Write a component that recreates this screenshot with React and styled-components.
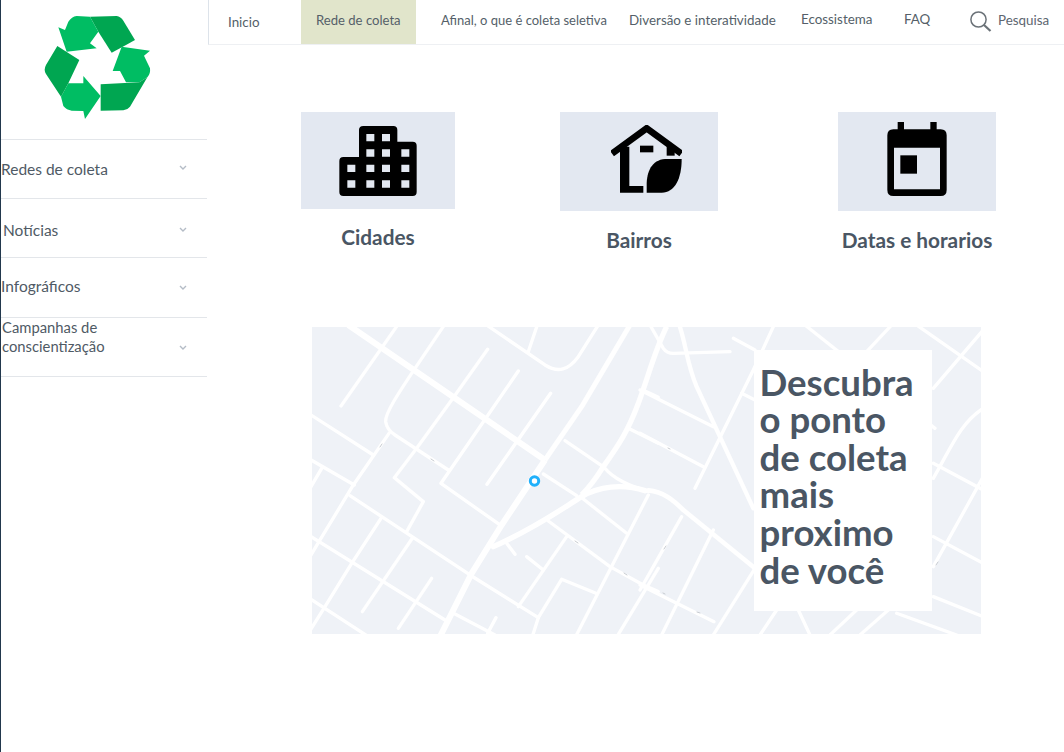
import styled, { createGlobalStyle } from 'styled-components';

const GlobalStyle = createGlobalStyle`
  html, body {
    margin: 0;
    padding: 0;
    background: #fff;
    font-family: 'Lato', 'Noto Sans', sans-serif;
    overflow: hidden;
  }
`;

const Page = styled.div`
  display: flex;
  width: 1064px;
  height: 752px;
  overflow: hidden;
`;

const Sidebar = styled.aside`
  flex: 0 0 208px;
  width: 208px;
  box-sizing: border-box;
  border-left: 1px solid #22384d;
  padding-right: 1px;
`;

const LogoBox = styled.div`
  height: 139px;
  box-sizing: border-box;
  padding: 16px 0 0 43px;
`;

const SideRow = styled.div`
  display: flex;
  align-items: ${props => props.$top ? 'flex-start' : 'center'};
  justify-content: space-between;
  box-sizing: border-box;
  height: ${props => props.$height}px;
  border-top: 1px solid #e3e6ea;
  padding-left: ${props => props.$indent}px;
  padding-right: 19px;
  color: #4f5a65;
`;

const SideLabel = styled.span`
  position: relative;
  top: ${props => props.$nudge || 0}px;
  font-size: ${props => props.$small ? '14.8px' : '15.5px'};
  line-height: 19px;
`;

const SideEnd = styled.div`
  width: 206px;
  border-top: 1px solid #e3e6ea;
`;

const Chevron = styled.svg`
  position: relative;
  top: ${props => props.$nudge || 0}px;
  width: 10px;
  height: 7px;
  fill: none;
  stroke: #b4bcc6;
  stroke-width: 1.4;
  flex: none;
`;

const Main = styled.main`
  flex: 1;
  min-width: 0;
`;

const TopBar = styled.nav`
  display: flex;
  height: 45px;
  box-sizing: border-box;
  border-left: 1px solid #dde3ea;
  border-bottom: 1px solid #eef0f3;
`;

const NavItem = styled.a`
  display: block;
  box-sizing: border-box;
  flex: 0 0 ${props => props.$width}px;
  min-width: 0;
  padding: ${props => props.$top}px 0 0 ${props => props.$left}px;
  background: ${props => props.$active ? '#e1e5cb' : 'transparent'};
  color: #555f69;
  font-size: ${props => props.$size || 13.4}px;
  line-height: 18px;
  white-space: nowrap;
`;

const SearchBox = styled.div`
  display: flex;
  align-items: flex-start;
  gap: 5px;
  padding: 7px 0 0 0;
  color: #5d6670;
  font-size: 13.4px;
  line-height: 18px;
`;

const SearchText = styled.span`
  padding-top: 4px;
`;

const Shortcuts = styled.section`
  display: grid;
  grid-template-columns: 259px 278px 158px;
  align-items: start;
  padding: 67px 0 0 93px;
`;

const Shortcut = styled.div`
  width: ${props => props.$width}px;
  display: flex;
  flex-direction: column;
  align-items: center;
`;

const Tile = styled.div`
  display: flex;
  justify-content: center;
  align-items: flex-start;
  box-sizing: border-box;
  width: 100%;
  height: ${props => props.$height}px;
  padding-top: ${props => props.$top}px;
  background: #e3e8f1;
`;

const TileIcon = styled.svg`
  display: block;
  width: ${props => props.$w}px;
  height: ${props => props.$h}px;
  margin-left: ${props => props.$shift || 0}px;
  fill: #000;
`;

const ShortcutLabel = styled.div`
  margin-top: ${props => props.$gap}px;
  color: #4a5664;
  font-size: 20.8px;
  font-weight: 700;
  line-height: 25px;
  white-space: nowrap;
`;

const MapPanel = styled.section`
  position: relative;
  width: 669px;
  height: 307px;
  margin: 75px 0 0 104px;
  background: #eff2f7;
  overflow: hidden;
`;

const MapDrawing = styled.svg`
  display: block;
  width: 669px;
  height: 307px;
`;

const CallOut = styled.div`
  position: absolute;
  top: 23px;
  right: 49px;
  box-sizing: border-box;
  width: 178px;
  height: 261px;
  padding: 13.6px 0 0 5.5px;
  background: #fff;
  color: #4a5664;
  font-size: 36.6px;
  font-weight: 700;
  line-height: 37.6px;
`;

function RecycleLogo() {
  return (
    <svg width="108" height="104" viewBox="132 48 324 312" style={{ display: 'block' }}>
      <g>
        <path fill="#00a651" d="M270 50 L350 48 Q362 50 370 62 L405 120 L378 135 L335 158 L295 95 Z" />
        <path fill="#00bd63" d="M270 50 L230 48 Q215 50 205 65 L195 90 L175 82 L200 155 L290 145 L270 130 L295 95 Z" />
        <path fill="#00bd63" d="M365 140 L450 152 L432 167 L450 205 Q452 222 442 232 L418 247 L378 247 L360 213 L338 213 Z" />
        <path fill="#00a651" d="M302 253 L418 247 L442 232 L390 320 Q382 330 370 331 L302 332 Z" />
        <path fill="#00bd63" d="M205 250 L250 250 L250 228 L302 288 L255 357 L250 333 L215 332 Q200 330 190 318 L183 290 Z" />
        <path fill="#00a651" d="M172 138 L238 180 L205 250 L183 290 L138 222 Q130 210 138 195 Z" />
      </g>
    </svg>
  );
}

function ChevronDown({ nudge }) {
  return (
    <Chevron viewBox="0 0 10 7" $nudge={nudge}>
      <path d="M2 2 L5 5 L8 2" />
    </Chevron>
  );
}

function Roads() {
  return (
    <MapDrawing viewBox="312 327 669 307">
      <g fill="none" stroke="#fff" strokeLinecap="round" strokeLinejoin="round">
        {/* metade esquerda do mapa */}
        <g transform="translate(305 320) scale(0.3333)" strokeWidth="10">
          <path strokeWidth="18" strokeLinecap="butt" d="M130 15 L720 420" />
          <path strokeWidth="15" strokeLinecap="butt" d="M975 15 L830 260 L720 420" />
          <path strokeWidth="18" strokeLinecap="butt" d="M720 420 L590 615 L500 760 L405 950" />
          <path d="M278 15 L108 258" />
          <path d="M418 15 L330 145 C280 220 240 280 242 305 C245 325 255 335 270 345 L430 450" />
          <path d="M548 88 L440 240 L335 385 L268 473 L355 545 L305 635" />
          <path d="M640 153 L408 490 L585 615" />
          <path d="M737 220 L546 493" />
          <path d="M252 340 L145 495 L45 660 L15 710" />
          <path d="M15 283 L205 405" />
          <path d="M15 418 L148 495" />
          <path d="M135 527 L495 765 L700 893" />
          <path d="M50 445 L15 505" />
          <path d="M228 595 L140 730 L60 860 L15 932" />
          <path d="M15 648 L420 900" />
          <path d="M322 655 L172 875" />
          <path d="M380 775 L280 925" />
          <path d="M15 836 L190 950" />
          <path d="M697 15 L670 95" />
          <path d="M545 15 L720 135 C760 160 790 150 820 110 L880 15" />
          <path strokeWidth="16" strokeLinecap="butt" d="M1085 20 C1050 90 1030 170 1000 250 C970 330 945 370 895 440 C870 480 850 505 830 525" />
          <path d="M780 362 L890 437" />
          <path d="M1020 213 L1060 232" />
          <path d="M970 325 L1060 370" />
          <path d="M715 462 L815 527" />
          <path d="M835 537 L965 640" />
          <path strokeWidth="16" d="M565 680 C700 620 780 560 830 530 C880 500 950 490 1020 512" />
          <path d="M900 445 C930 480 980 500 1030 514" />
          <path d="M730 603 L915 740 L1015 795 L1060 815" />
          <path d="M1030 525 L812 950" />
          <path d="M1060 745 L936 950" />
          <path d="M785 650 L640 860" />
          <path d="M605 670 L630 703" />
          <path d="M665 710 L715 750" />
          <path d="M450 882 L570 945" />
          <path d="M573 893 L548 940" />
          <path d="M700 893 L770 778 L873 820" />
          <path d="M700 893 L682 950" />
        </g>
        {/* metade direita */}
        <g transform="translate(640 320) scale(0.3333)" strokeWidth="10">
          <path d="M30 15 L70 85 Q80 100 100 100 L270 95" />
          <path strokeWidth="13" d="M118 15 C140 80 140 130 170 200 L340 565" />
          <path d="M0 210 L220 320" />
          <path d="M0 340 L190 440" />
          <path d="M280 55 L345 90" />
          <path d="M400 20 L340 150 L165 505" />
          <path d="M305 220 L345 240" />
          <path d="M495 15 L885 325" />
          <path d="M755 15 L680 95" />
          <path d="M830 15 L1030 155" />
          <path d="M1030 30 L880 205" />
          <path strokeWidth="14" d="M25 511 C70 515 100 540 130 570 L345 745" />
          <path d="M125 590 L40 740 L0 810" />
          <path d="M220 630 L65 945" />
          <path d="M0 795 L222 905" />
          <path d="M345 745 L220 945" />
          <path d="M880 430 L1030 510" />
          <path d="M1030 265 C960 310 935 380 880 475" />
          <path d="M880 650 L1030 730" />
          <path d="M1030 470 L880 740" />
          <path d="M880 830 L1030 890" />
          <path d="M410 870 L360 945" />
          <path d="M475 870 L510 945" />
          <path d="M650 870 L570 945" />
          <path d="M745 870 L660 945" />
          <path d="M770 880 L950 945" />
        </g>
      </g>
      {/* setinhas cinza de sentido das ruas */}
      <g stroke="#c8ccd1" strokeWidth="1" strokeLinecap="round">
        <path d="M380 447 L382 444" />
        <path d="M431 459 L434 461" />
        <path d="M575 541 L578 543" />
        <path d="M624 573 L627 575" />
        <path d="M664 549 L666 546" />
        <path d="M668 448 L670 449" />
        <path d="M663 593 L665 594" />
        <path d="M697 612 L700 613" />
        <path d="M936 565 L938 562" />
      </g>
      <circle cx="534.5" cy="481" r="4.2" fill="#fff" stroke="#1fb0fb" strokeWidth="3" />
    </MapDrawing>
  );
}

export default function App() {
  return (
    <Page>
      <GlobalStyle />
      <Sidebar>
        <LogoBox>
          <RecycleLogo />
        </LogoBox>
        <SideRow $height={59} $indent={0}>
          <SideLabel>Redes de coleta</SideLabel>
          <ChevronDown nudge={-2} />
        </SideRow>
        <SideRow $height={59} $indent={2}>
          <SideLabel $nudge={2}>Notícias</SideLabel>
          <ChevronDown nudge={1} />
        </SideRow>
        <SideRow $height={60} $indent={0}>
          <SideLabel $nudge={-1}>Infográficos</SideLabel>
          <ChevronDown />
        </SideRow>
        <SideRow $height={59} $indent={1} $top>
          <SideLabel $small>
            Campanhas de<br />conscientização
          </SideLabel>
          <ChevronDown nudge={26} />
        </SideRow>
        <SideEnd />
      </Sidebar>
      <Main>
        <TopBar>
          <NavItem $width={92} $left={19} $top={13}>Inicio</NavItem>
          <NavItem $width={115} $left={15} $top={11} $size={13.1} $active>Rede de coleta</NavItem>
          <NavItem $width={173} $left={25} $top={11} $size={13}>Afinal, o que é coleta seletiva</NavItem>
          <NavItem $width={172} $left={40} $top={11}>Diversão e interatividade</NavItem>
          <NavItem $width={143} $left={40} $top={10}>Ecossistema</NavItem>
          <NavItem $width={65} $left={0} $top={10}>FAQ</NavItem>
          <SearchBox>
            <svg width="24" height="26" viewBox="0 0 24 26" fill="none" stroke="#6b7278">
              <circle cx="9.5" cy="12.5" r="7.6" strokeWidth="1.5" />
              <path d="M15 18 L21.5 24" strokeWidth="2.2" />
            </svg>
            <SearchText>Pesquisa</SearchText>
          </SearchBox>
        </TopBar>
        <Shortcuts>
          <Shortcut $width={154}>
            <Tile $height={97} $top={14}>
              <TileIcon $w={78} $h={70} viewBox="133 63 232 210">
                <path
                  fillRule="evenodd"
                  d="M205 63 H295 Q307 63 307 75 V110 H353 Q365 110 365 122 V261 Q365 273 353 273 H145 Q133 273 133 261 V168 Q133 156 145 156 H192 V75 Q192 63 205 63 Z
                  M214 87 h24 v22 h-24 Z M261 87 h24 v22 h-24 Z
                  M214 133 h24 v22 h-24 Z M261 133 h24 v22 h-24 Z M319 133 h24 v22 h-24 Z
                  M157 179 h24 v22 h-24 Z M214 179 h24 v22 h-24 Z M261 179 h24 v22 h-24 Z M319 179 h24 v22 h-24 Z
                  M157 226 h24 v22 h-24 Z M214 226 h24 v22 h-24 Z M261 226 h24 v22 h-24 Z M319 226 h24 v22 h-24 Z"
                />
              </TileIcon>
            </Tile>
            <ShortcutLabel $gap={15}>Cidades</ShortcutLabel>
          </Shortcut>
          <Shortcut $width={158}>
            <Tile $height={99} $top={13}>
              <TileIcon $w={71} $h={69} $shift={15} viewBox="948 60 213 207">
                <path d="M951 146 L1055 70 L1159 146" fill="none" stroke="#000" strokeWidth="20" />
                <path d="M975 125 H1003 V243 H1045 V263 H975 Z" />
                <rect x="1035" y="122" width="40" height="20" />
                <rect x="1115" y="125" width="24" height="27" />
                <path d="M1160 162 H1110 C1070 165 1055 200 1055 240 V263 H1100 C1140 263 1160 220 1160 162 Z" />
              </TileIcon>
            </Tile>
            <ShortcutLabel $gap={16}>Bairros</ShortcutLabel>
          </Shortcut>
          <Shortcut $width={158}>
            <Tile $height={99} $top={10}>
              <TileIcon $w={60} $h={74} viewBox="187 50 178 222">
                <rect x="218" y="50" width="19" height="30" />
                <rect x="316" y="50" width="19" height="30" />
                <path
                  fillRule="evenodd"
                  d="M205 72 H347 Q365 72 365 90 V254 Q365 272 347 272 H205 Q187 272 187 254 V90 Q187 72 205 72 Z M207 127 V252 H345 V127 Z"
                />
                <rect x="226" y="150" width="50" height="55" />
              </TileIcon>
            </Tile>
            <ShortcutLabel $gap={16}>Datas e horarios</ShortcutLabel>
          </Shortcut>
        </Shortcuts>
        <MapPanel>
          <Roads />
          <CallOut>
            Descubra<br />o ponto<br />de coleta<br />mais<br />proximo<br />de você
          </CallOut>
        </MapPanel>
      </Main>
    </Page>
  );
}
